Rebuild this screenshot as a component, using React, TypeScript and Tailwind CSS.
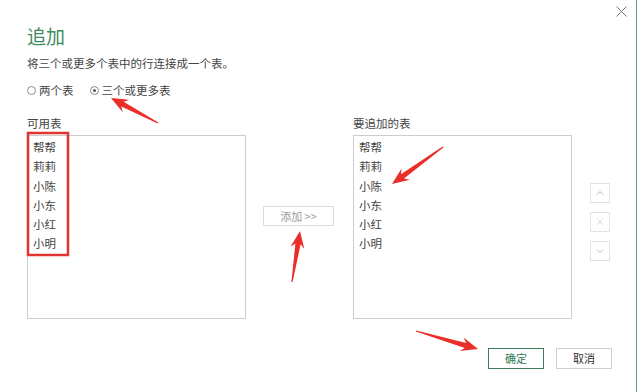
import React from 'react'

type Pt = [number, number]

// tapered red annotation arrow, tail -> tip
function arrowPoints(tail: Pt, tip: Pt) {
	const dx = tip[0] - tail[0]
	const dy = tip[1] - tail[1]
	const len = Math.hypot(dx, dy)
	const ux = dx / len
	const uy = dy / len
	const nx = -uy
	const ny = ux
	const at = (back: number, side: number): string =>
		`${(tip[0] - ux * back + nx * side).toFixed(1)},${(tip[1] - uy * back + ny * side).toFixed(1)}`
	const headLen = 17
	const neck = 13
	return [
		at(len, 0.6),
		at(neck, 2.6),
		at(headLen, 7),
		at(0, 0),
		at(headLen, -7),
		at(neck, -2.6),
		at(len, -0.6),
	].join(' ')
}

const arrows: [Pt, Pt][] = [
	[[158, 123], [111, 98]],
	[[292, 282], [300, 231]],
	[[443, 147], [392, 184]],
	[[416, 331], [478, 349]],
]

const names = ['帮帮', '莉莉', '小陈', '小东', '小红', '小明']

function TableList() {
	return (
		<div className="h-[184px] w-[219px] border border-[#cdcdcd] pl-[5px] pt-[2px]">
			{names.map((n) => (
				<div key={n} className="h-[19.3px] leading-[19.3px]">
					{n}
				</div>
			))}
		</div>
	)
}

function Radio({ checked, label }: { checked?: boolean; label: string }) {
	return (
		<div className="flex items-center gap-[3px]">
			<span className="flex h-[9px] w-[9px] items-center justify-center rounded-full border border-[#8a8a8a]">
				{checked && <span className="h-[3px] w-[3px] rounded-full bg-[#555]" />}
			</span>
			<span>{label}</span>
		</div>
	)
}

function SideButton({ children }: { children: React.ReactNode }) {
	return (
		<div className="flex h-[20px] w-[20px] items-center justify-center border border-[#e2e2e2]">
			<svg width="10" height="10" viewBox="0 0 10 10" fill="none" stroke="#b4b4b4" strokeWidth="1">
				{children}
			</svg>
		</div>
	)
}

export default function App() {
	return (
		<div className="relative h-[392px] w-[640px] overflow-hidden bg-white font-['Noto_Sans_CJK_SC',sans-serif] text-[11.5px] text-[#444]">
			<div className="flex h-full w-[637px] flex-col border-r border-[#5c9e78]">
				<div className="flex h-[20px] justify-end pr-[9px] pt-[6px]">
					<svg width="11" height="11" viewBox="0 0 11 11" stroke="#777" strokeWidth="1">
						<path d="M0.5 0.5 L10.5 10.5 M10.5 0.5 L0.5 10.5" />
					</svg>
				</div>

				<div className="pl-[27px]">
					<div className="mt-[6px] text-[19px] leading-[20px] text-[#3f8a60]">追加</div>
					<div className="mt-[10px] leading-[14px]">将三个或更多个表中的行连接成一个表。</div>

					<div className="mt-[13px] flex h-[14px] items-center gap-[16px] leading-[14px]">
						<Radio label="两个表" />
						<Radio checked label="三个或更多表" />
					</div>

					<div className="mt-[19px] flex items-start leading-[14px]">
						<div className="flex flex-col gap-[5px]">
							<div className="h-[14px]">可用表</div>
							<TableList />
						</div>

						<div className="ml-[17px] mt-[90px] flex h-[20px] w-[71px] items-center justify-center border border-[#dcdcdc] text-[11px] text-[#9a9a9a]">
							添加 &gt;&gt;
						</div>

						<div className="ml-[19px] flex flex-col gap-[5px]">
							<div className="h-[14px]">要追加的表</div>
							<TableList />
						</div>

						<div className="ml-[18px] mt-[67px] flex flex-col gap-[9px]">
							<SideButton>
								<path d="M2 6.5 L5 3.5 L8 6.5" />
							</SideButton>
							<SideButton>
								<path d="M2 2 L8 8 M8 2 L2 8" stroke="#dadada" />
							</SideButton>
							<SideButton>
								<path d="M2 3.5 L5 6.5 L8 3.5" />
							</SideButton>
						</div>
					</div>

					<div className="mt-[29px] flex justify-end gap-[12px] pr-[24px] leading-none">
						<div className="flex h-[21px] w-[56px] items-center justify-center border border-[#3b7d58] text-[11px] text-[#2f7a52]">
							确定
						</div>
						<div className="flex h-[21px] w-[56px] items-center justify-center border border-[#cfcfcf] text-[11px] text-[#333]">
							取消
						</div>
					</div>
				</div>
			</div>

			{/* red annotations drawn over the dialog */}
			<svg className="pointer-events-none absolute left-0 top-0" width="640" height="392">
				<rect x="28" y="133" width="40" height="122" fill="none" stroke="#e2342f" strokeWidth="2.5" />
				{arrows.map(([t, h], i) => (
					<polygon key={i} points={arrowPoints(t, h)} fill="#ea2f2b" />
				))}
			</svg>
		</div>
	)
}
